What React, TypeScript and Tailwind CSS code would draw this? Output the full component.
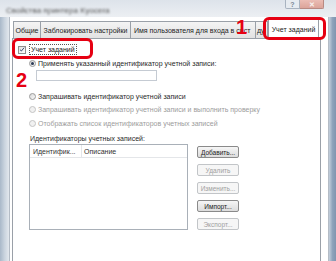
import React from 'react';

// ── Small Win7-style controls ───────────────────────────────────────────────

function Radio({ checked, disabled }: { checked?: boolean; disabled?: boolean }) {
  return (
    <span
      className={
        'relative flex h-[7px] w-[7px] shrink-0 items-center justify-center rounded-full border ' +
        (disabled ? 'border-[#c4c4c4] bg-[#f1f1f1]' : 'border-[#9a9a9a] bg-gradient-to-br from-[#d8d8d8] to-[#fafafa]')
      }
    >
      {checked && <span className="h-[3px] w-[3px] rounded-full bg-[#2b3a55]" />}
    </span>
  );
}

function RadioRow({ label, checked, disabled, className }: {
  label: string; checked?: boolean; disabled?: boolean; className?: string;
}) {
  return (
    <div className={'flex h-[9px] items-center gap-[2px] pl-[16px] ' + (className ?? '')}>
      <Radio checked={checked} disabled={disabled} />
      <span className={'whitespace-nowrap ' + (disabled ? 'text-[#9c9c9c]' : 'text-[#2a2a2a]')}>{label}</span>
    </div>
  );
}

function Btn({ label, disabled }: { label: string; disabled?: boolean }) {
  return (
    <div
      className={
        'flex h-[12px] w-[42px] items-center justify-center rounded-[2px] border text-[6.5px] ' +
        (disabled
          ? 'border-[#c2c5c8] bg-[#f6f6f6] text-[#a0a0a0]'
          : 'border-[#8a8a8a] bg-gradient-to-b from-[#f6f6f6] to-[#dcdcdc] text-[#222]')
      }
    >
      {label}
    </div>
  );
}

// ── Page ────────────────────────────────────────────────────────────────────

export default function App() {
  return (
    <div className="relative flex h-[261px] w-[336px] flex-col overflow-hidden bg-white font-['Liberation_Sans',Arial,sans-serif] text-[7px] leading-[9px]">
      {/* Title bar */}
      <div className="relative flex h-[17px] shrink-0 items-end bg-gradient-to-b from-[#dde3ea] to-[#eceff3] pl-[6px]">
        <span className="mb-[2px] whitespace-nowrap text-[8px] text-[#555] blur-[1.2px]">Свойства принтера Kyocera</span>
        <div className="absolute right-[12px] top-0 flex">
          <div className="flex h-[9px] w-[15px] items-center justify-center rounded-bl-[2px] border border-t-0 border-[#a8b3c0] bg-[#e6ebf0] text-[7px] font-bold text-[#7b8796]">?</div>
          <div className="flex h-[9px] w-[24px] items-center justify-center rounded-br-[2px] border border-l-0 border-t-0 border-[#b88a83] bg-gradient-to-b from-[#ebbdb5] to-[#dca49a] text-[7px] font-bold text-[#f7f0ef]">✕</div>
        </div>
      </div>

      <div className="flex min-h-0 flex-1">
        {/* Left frame */}
        <div className="w-[10px] shrink-0 border-r border-[#b4bcc6] bg-gradient-to-r from-[#a9b8c9] via-[#c9d3de] to-[#e3e8ee]" />

        {/* Dialog content */}
        <div className="flex min-w-0 flex-1 flex-col bg-white pl-[2px] pr-[7px]">
          {/* Tabs */}
          <div className="flex h-[21px] shrink-0 items-end pl-[1px]">
            <div className="flex h-[17px] w-[28px] items-center justify-center border border-b-0 border-[#9aa0a8] bg-gradient-to-b from-[#f4f4f4] to-[#e2e2e2] text-[#222]">Общие</div>
            <div className="flex h-[17px] w-[90px] items-center justify-center border border-b-0 border-l-0 border-[#9aa0a8] bg-gradient-to-b from-[#f4f4f4] to-[#e2e2e2] text-[#222]">Заблокировать настройки</div>
            <div className="flex h-[17px] w-[125px] items-center whitespace-nowrap border border-b-0 border-l-0 border-[#9aa0a8] bg-gradient-to-b from-[#f4f4f4] to-[#e2e2e2] pl-[3px] text-[#222]">Имя пользователя для входа в сист</div>
            <div className="flex h-[17px] w-[12px] items-center border border-b-0 border-l-0 border-[#9aa0a8] bg-gradient-to-b from-[#f4f4f4] to-[#e2e2e2] pl-[1px] text-[#222]">ду</div>
            <div className="-mb-[1px] flex h-[21px] w-[51px] items-center justify-center border border-b-0 border-[#9aa0a8] bg-white text-[#222]">Учет заданий</div>
          </div>

          {/* Tab panel */}
          <div className="flex flex-1 flex-col border border-b-0 border-[#9aa0a8] bg-white">
            <div className="mt-[6px] flex h-[9px] items-center pl-[5px]">
              <span className="flex h-[8px] w-[8px] shrink-0 items-center justify-center border border-[#8f8f8f] bg-gradient-to-br from-[#e0e0e0] to-white">
                <svg viewBox="0 0 8 8" className="h-[7px] w-[7px]">
                  <path d="M1.3 4.2 L3.2 6 L6.8 1.6" fill="none" stroke="#33456b" strokeWidth="1.3" />
                </svg>
              </span>
              <span className="ml-[3px] border border-dotted border-[#555] px-[1px] text-[#222]">Учет заданий</span>
            </div>

            <RadioRow className="mt-[5px]" checked label="Применять указанный идентификатор учетной записи:" />

            <div className="ml-[23px] mt-[2px] h-[11px] w-[121px] border border-[#c5cbd3] bg-white" />

            <RadioRow className="mt-[11px]" label="Запрашивать идентификатор учетной записи" />
            <RadioRow className="mt-[4px]" disabled label="Запрашивать идентификатор учетной записи и выполнить проверку" />
            <RadioRow className="mt-[5px]" disabled label="Отображать список идентификаторов учетных записей" />

            <div className="mt-[6px] h-[9px] pl-[17px] text-[#2a2a2a]">Идентификаторы учетных записей:</div>

            <div className="mt-[1px] flex">
              <div className="ml-[16px] h-[86px] w-[159px] border border-[#a9b0b8] bg-white">
                <div className="flex h-[13px] items-center border-b border-[#e4e6e9] text-[#333]">
                  <span className="w-[52px] border-r border-[#e4e6e9] pl-[3px] leading-[13px]">Идентифик...</span>
                  <span className="pl-[2px]">Описание</span>
                </div>
              </div>
              <div className="ml-[9px] mt-[2px] flex flex-col gap-[6px]">
                <Btn label="Добавить..." />
                <Btn label="Удалить" disabled />
                <Btn label="Изменить..." disabled />
                <Btn label="Импорт..." />
                <Btn label="Экспорт..." disabled />
              </div>
            </div>
          </div>
        </div>

        {/* Right frame */}
        <div className="w-[8px] shrink-0 border-l border-[#b4bcc6] bg-gradient-to-r from-[#c5d0dc] via-[#8ea3bb] to-[#7f95af]" />
      </div>

      {/* Annotations */}
      <div className="pointer-events-none absolute left-[263px] top-[17px] h-[23px] w-[63px] rounded-[6px] border-[3px] border-[#e60012]" />
      <div className="pointer-events-none absolute left-[12px] top-[38px] h-[21px] w-[81px] rounded-[6px] border-[3px] border-[#e60012]" />
      <span className="absolute left-[236px] top-[15px] text-[20px] font-bold leading-[24px] text-[#e60012]">1</span>
      <span className="absolute left-[16px] top-[68px] text-[20px] font-bold leading-[24px] text-[#e60012]">2</span>
    </div>
  );
}
